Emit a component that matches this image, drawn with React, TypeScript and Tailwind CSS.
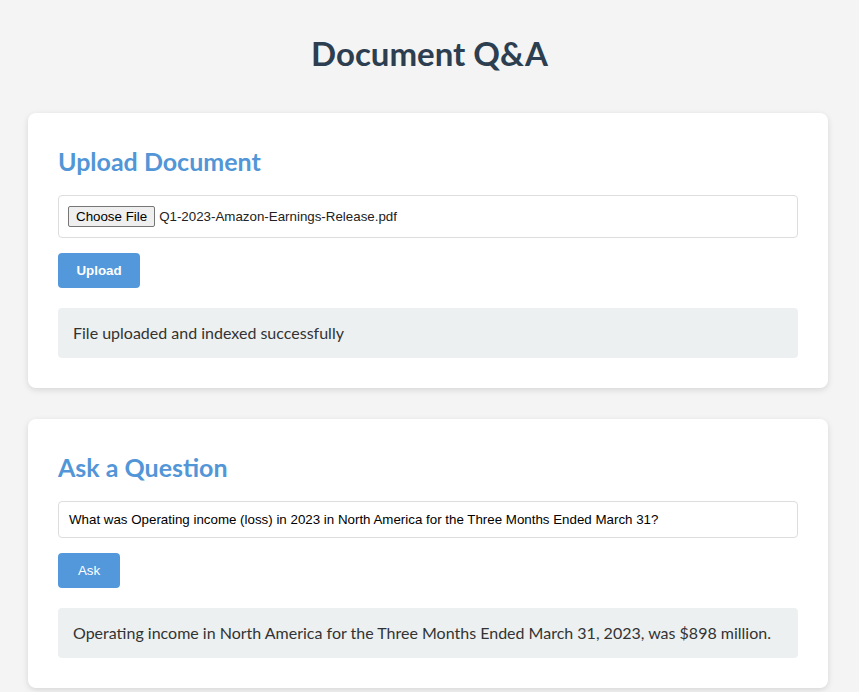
const sans = "font-['Segoe_UI','Lato','Noto_Sans',sans-serif]";

function StatusBox({ children }: { children: React.ReactNode }) {
  return (
    <div className={`mt-5 rounded bg-[#ecf0f1] px-[15px] py-[13px] text-base leading-6 text-[#333] ${sans}`}>{children}</div>
  );
}

function Card({ title, children }: { title: string; children: React.ReactNode }) {
  return (
    <section className="mb-[31px] w-[800px] rounded-lg bg-white p-[30px] shadow-[0_2px_6px_rgba(0,0,0,0.12)]">
      <h2 className={`mb-4 text-[25px] leading-9 font-bold text-[#5296d7] ${sans}`}>{title}</h2>
      {children}
    </section>
  );
}

export default function App() {
  return (
    <div className="min-h-[692px] bg-[#f4f4f4] px-7 pt-[29px]">
      <h1 className={`mb-9 text-center text-[33px] leading-12 font-bold text-[#2c3e50] ${sans}`}>Document Q&amp;A</h1>

      <Card title="Upload Document">
        <div className="flex h-[43px] items-center rounded border border-[#ddd] px-[9px] font-['Liberation_Sans',Arial,sans-serif] text-[13.33px] text-[#222]">
          <span className="rounded-[2px] border border-[#767676] bg-[#efefef] px-[7px] py-px leading-[17px] text-black">Choose File</span>
          <span className="ml-1">Q1-2023-Amazon-Earnings-Release.pdf</span>
        </div>
        <button className="mt-[15px] h-[35px] w-[82px] rounded bg-[#5398db] font-['Liberation_Sans',Arial,sans-serif] text-[13.33px] font-bold text-white">
          Upload
        </button>
        <StatusBox>File uploaded and indexed successfully</StatusBox>
      </Card>

      <Card title="Ask a Question">
        <div className="flex h-[37px] items-center rounded border border-[#ddd] px-[10px] font-['Liberation_Sans',Arial,sans-serif] text-[13.33px] text-black">
          What was Operating income (loss) in 2023 in North America for the Three Months Ended March 31?
        </div>
        <button className="mt-[15px] h-[35px] w-[62px] rounded bg-[#5398db] font-['Liberation_Sans',Arial,sans-serif] text-[13.33px] text-white">
          Ask
        </button>
        <StatusBox>Operating income in North America for the Three Months Ended March 31, 2023, was $898 million.</StatusBox>
      </Card>
    </div>
  );
}
